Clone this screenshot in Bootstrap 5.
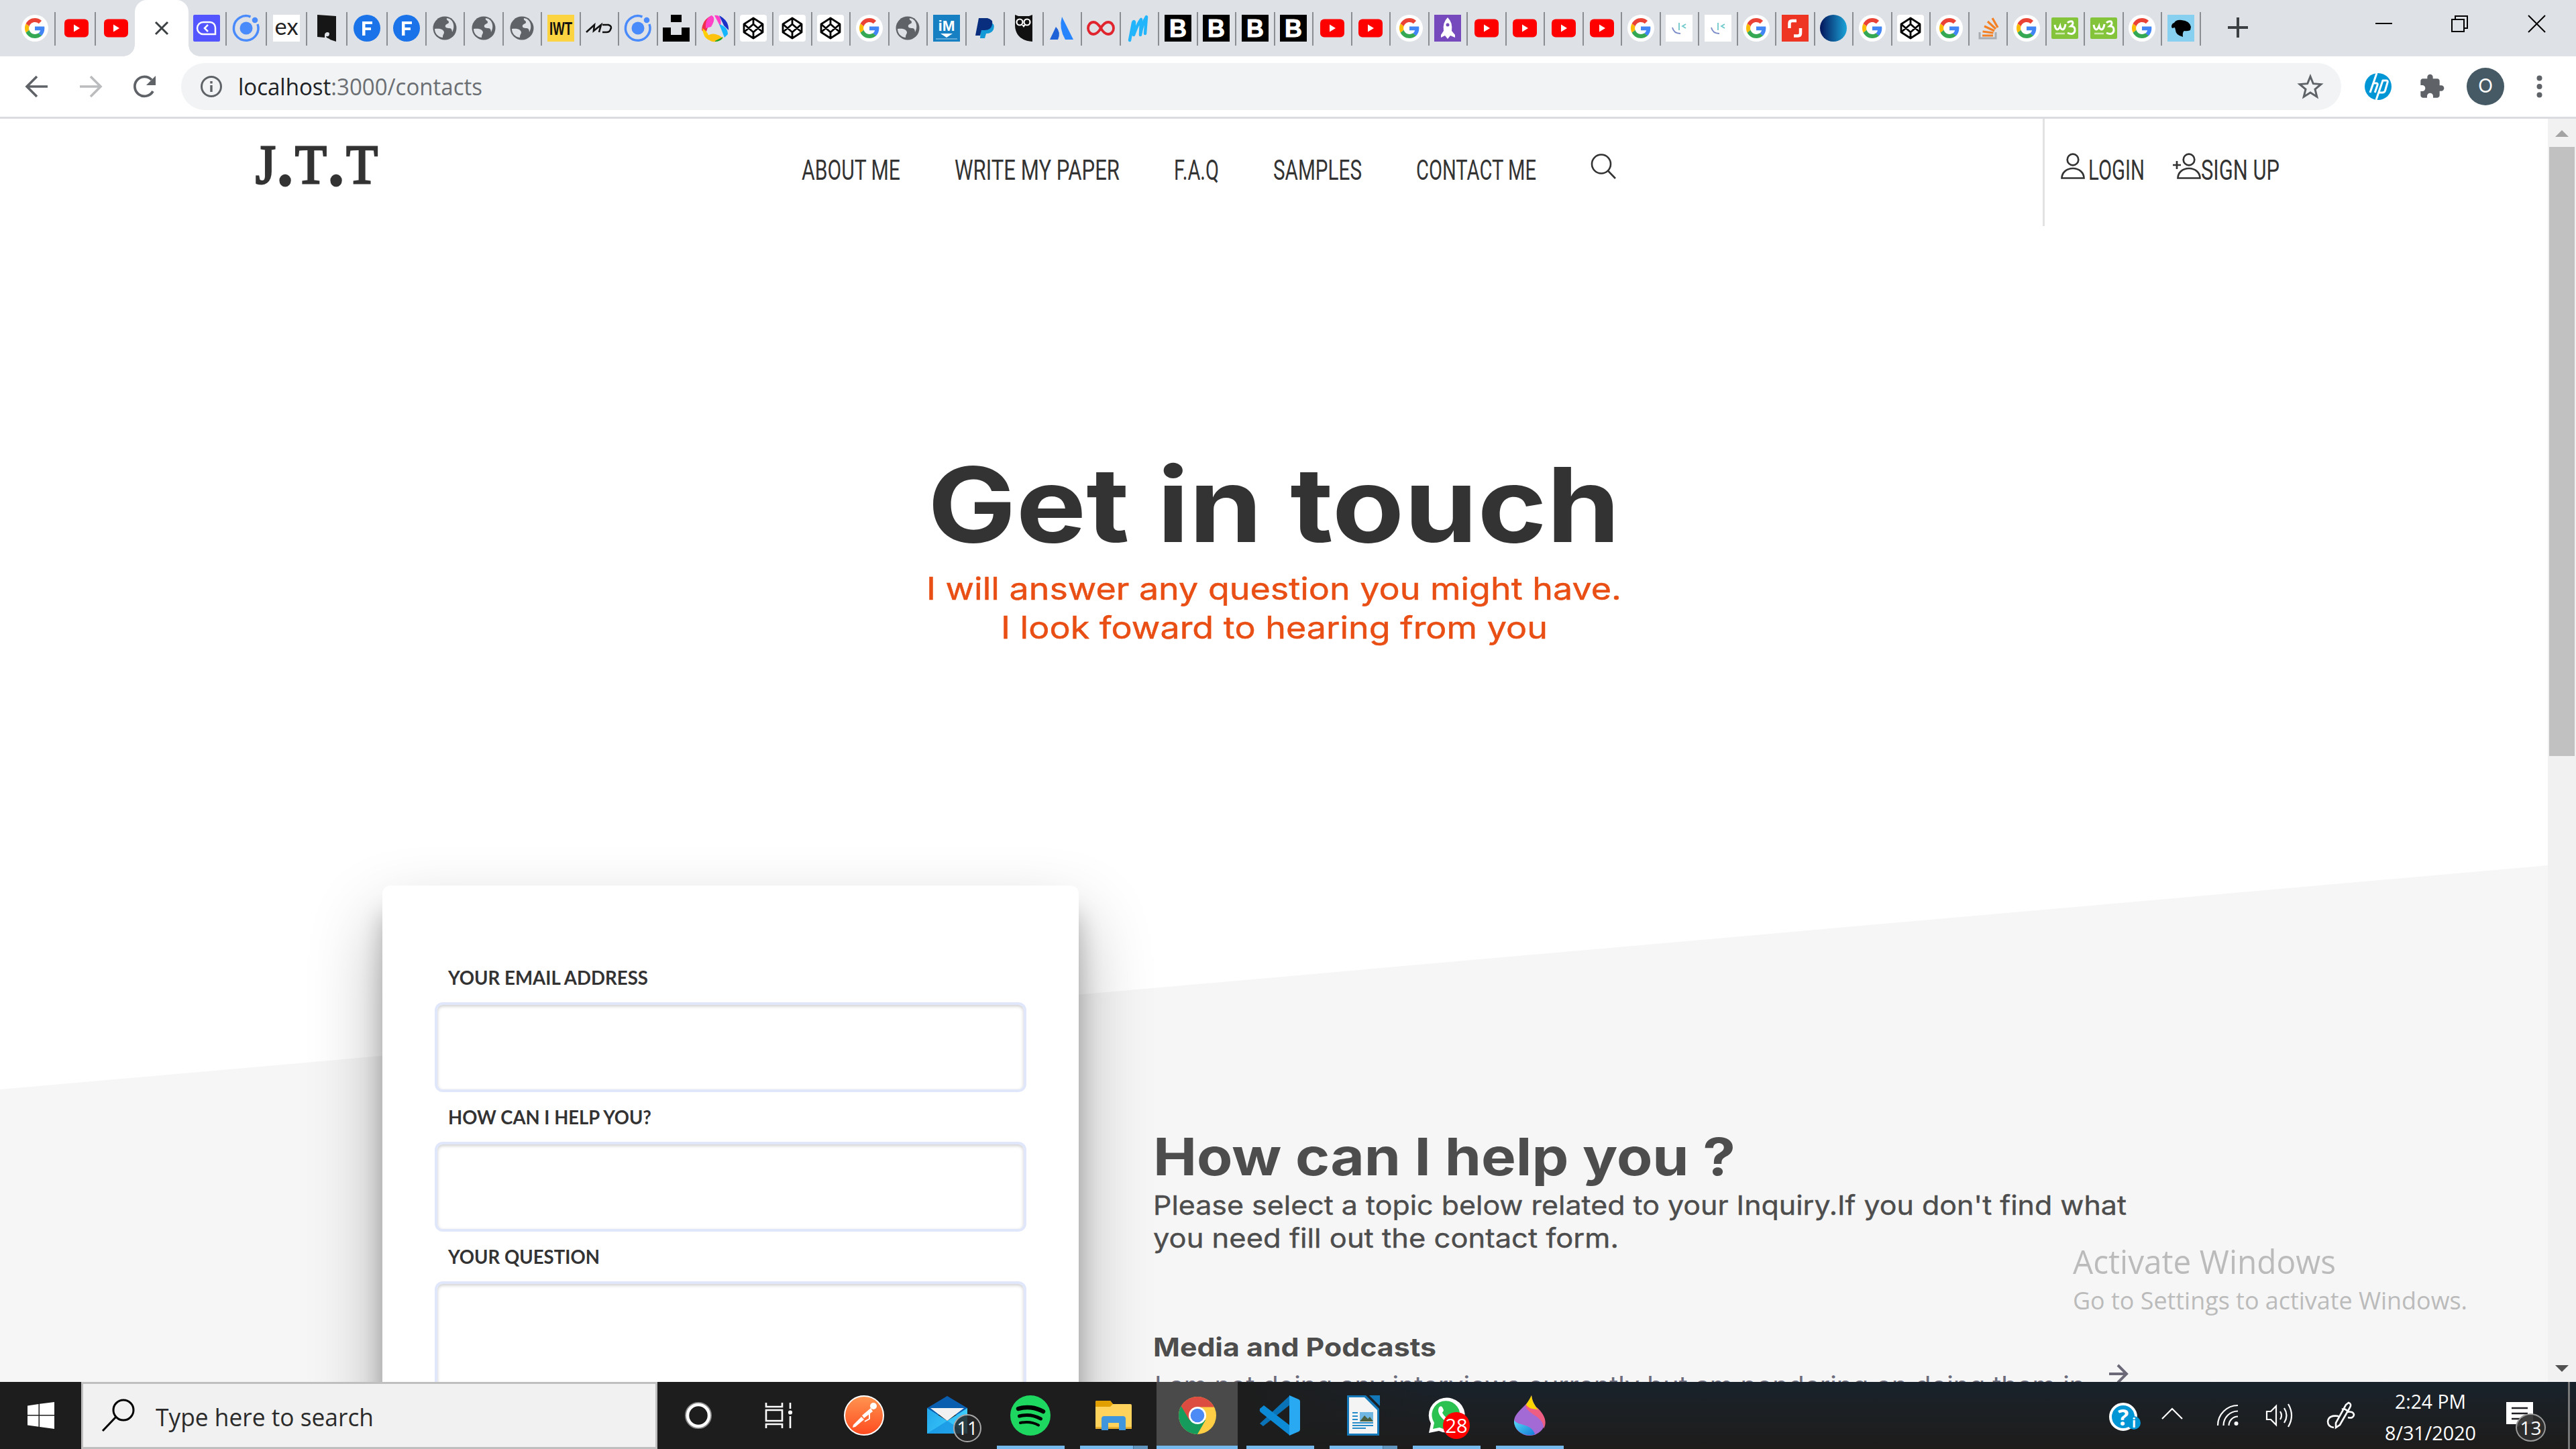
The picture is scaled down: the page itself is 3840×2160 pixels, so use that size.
<!DOCTYPE html>
<html lang="en">
<head>
<meta charset="utf-8">
<title>J.T.T - Contacts</title>
<link href="https://cdn.jsdelivr.net/npm/bootstrap@5.3.0/dist/css/bootstrap.min.css" rel="stylesheet">
<style>
html,body{width:3840px;height:2160px;overflow:hidden}
body{font-family:Inter,"Open Sans",sans-serif;color:#333;background:#fff}
svg{display:block;flex:none;overflow:visible}
.fit{display:inline-block;white-space:nowrap;transform-origin:0 50%}
.segoe{font-family:"Open Sans","Noto Sans",sans-serif}
.tabstrip{height:84px;background:#dee1e6;padding-left:22.5px}
.tab-item{width:57.5px;height:50px;margin-top:18px;border-right:2.5px solid #8a8d91}
.tab-item.wide{width:60px}
.tab-item.nudge{padding-left:5px}
.tab-item.no-line{border-color:transparent;width:58px}
.tab-active{width:80px;height:84px;background:#fff;border-radius:18px 18px 0 0;position:relative}
.tab-active::before,.tab-active::after{content:"";position:absolute;bottom:0;width:17px;height:17px}
.tab-active::before{left:-17px;background:radial-gradient(circle at 0 0,transparent 16.5px,#fff 17px)}
.tab-active::after{right:-17px;background:radial-gradient(circle at 100% 0,transparent 16.5px,#fff 17px)}
.win-min{margin-left:190px}.win-max{margin-left:88px}.win-close{margin-left:90px}
.toolbar{height:93px;border-bottom:3px solid #dadce0;padding-left:35px}
.tool-gap{gap:40px}
.omnibox{width:3220px;height:70px;border-radius:35px;background:#f1f3f4;margin-left:35px;padding:0 26px 0 28px;font-size:35px;color:#6b6e72}
.omnibox b{font-weight:400;color:#202124}
.url-text{margin-left:23px}
.avatar-dot{width:56px;height:56px;background:#455a64;color:#fff;font-size:29px;line-height:54px}
.viewport{height:1883px}
.site{width:3798px;height:1883px;overflow:hidden;position:relative;isolation:isolate}
.site::before{content:"";position:absolute;inset:0;z-index:-1;background:#f6f6f6;clip-path:polygon(0 1447px,100% 1113px,100% 100%,0 100%)}
.scroll-track{width:42px;background:#f1f1f1;padding:17px 2px 15px}
.scroll-thumb{height:908px;margin-top:15px;background:#c1c1c1}
.site-head{height:160px;padding-left:381px}
.brand-mark{width:814px;padding-top:27px;font:400 83px/82px "Liberation Serif",serif;color:#333;-webkit-text-stroke:3px #333}
.brand-mark i{font-style:normal;-webkit-text-stroke:9px #333;margin:0 6px 0 5px}
.menu{gap:81px;font:400 42px/50px Roboto,sans-serif;color:#333;padding-top:52px}
.account{width:753px;border-left:3px solid #e2e2e2;padding:52px 0 0 24px;font:400 42px/50px Roboto,sans-serif}
.signup-link{margin-left:42px}
.hero{padding-top:335px}
.hero h1{font-size:154px;line-height:160px;font-weight:700;margin:0;color:#333}
.hero p{margin:16px 0 0;font-size:46px;line-height:58px;font-weight:400;color:#e94e14;-webkit-text-stroke:.5px #e94e14}
.contact-row{margin-top:356px;padding-left:570px}
.ask-card{width:1038px;height:1000px;background:#fff;border-radius:12px;padding:117px 78px;box-shadow:0 53px 107px rgba(0,0,0,.3),0 42px 34px rgba(0,0,0,.22)}
.ask-card label{display:block;height:40px;padding-left:20px;margin-bottom:17px;font:700 28px/40px Lato,sans-serif;color:#333}
.ask-card .form-control{height:134px;margin-bottom:17px;border:4px solid #e1e7fb;border-radius:12px;box-shadow:inset 0 2px 5px rgba(0,0,0,.2)}
.ask-card textarea.form-control{height:320px;resize:none}
.topics{margin-left:111px;padding-top:364px;color:#4d4d4d}
.topics h2{font-size:77px;line-height:80px;font-weight:700;margin:0 0 8px}
.topics p{font-size:40px;line-height:49px;font-weight:400;margin:0;-webkit-text-stroke:.4px #4d4d4d}
.topics h3{font-size:38px;line-height:50px;font-weight:700;margin:113px 0 7px}
.topics .topic-text{font-size:38px;line-height:50px;font-weight:400;color:#6b6b7b;width:1424px}
.topic-text{padding-left:2px}
.watermark{position:absolute;left:3090px;top:1850px;color:#bbb}
.watermark .wm-a{font-size:48.5px;line-height:60px}
.watermark .wm-b{font-size:36px;line-height:52px;margin-top:3px}
.taskbar{height:100px;background:linear-gradient(90deg,#1d1d1d 0,#1d1d1d 48%,rgba(29,29,29,0) 56%),linear-gradient(#19222b,#1c1f22 55%,#1e1c1b)}
.start-key{width:121px}
.find-box{width:859px;background:#f1f1f1;border:3px solid #bfbfbf;padding-left:27px;font-size:37px;color:#2b2b2b}
.find-text{margin-left:31px;margin-top:4px}
.sys-key{width:122px}
.first-app{margin-left:2px}
.app-key{width:124px;position:relative}
.app-key .bar{position:absolute;bottom:0;left:12px;width:101px;height:5px;background:#76b9ed}
.app-key .bar.split{background:linear-gradient(90deg,#76b9ed 78%,#4a7598 78%,#4a7598 79.5%,#6095bf 79.5%)}
.app-key.live .bar{left:0;width:100%}
.app-key.live{background:#4a4a4a;width:121px;margin:0 1px 0 2px}
.count-dot{position:absolute;border-radius:50%;color:#fff;text-align:center}
.count-mail{width:42px;height:42px;left:71px;top:48px;background:rgba(38,38,38,.85);border:2px solid #a8a8a8;font-size:27px;line-height:38px}
.count-wa{width:40px;height:40px;left:57px;top:45px;background:#f00;font-size:29px;line-height:40px}
.count-note{width:45px;height:42px;left:14px;top:47px;background:rgba(46,46,46,.92);border:2px solid #9a9a9a;font-size:28px;line-height:38px}
.clock{font-size:29px;line-height:47px;color:#fff;width:140px;margin-left:42px;padding-top:3px}
.note-key{width:80px;position:relative;margin-left:43px;padding-top:30px}
.desk-edge{width:3px;background:#777;margin:0 9px 0 12px}
</style>
</head>
<body>
<header>
<div class="tabstrip d-flex" id="tabs"></div>
<div class="toolbar d-flex align-items-center">
 <div class="d-flex tool-gap">
  <svg width="40" height="40" viewBox="0 0 40 40" fill="none" stroke="#5f6368" stroke-width="3.6"><path d="M36 20H6M20 5 5 20l15 15"/></svg>
  <svg width="40" height="40" viewBox="0 0 40 40" fill="none" stroke="#babcbe" stroke-width="3.6"><path d="M4 20h30M20 5l15 15-15 15"/></svg>
  <svg width="40" height="40" viewBox="0 0 40 40"><path d="M33 27A14.500 14.500 0 1 1 31 10" fill="none" stroke="#5f6368" stroke-width="3.800"/><path d="M37 4v14H23z" fill="#5f6368"/></svg>
 </div>
 <div class="omnibox segoe d-flex align-items-center">
  <svg width="34" height="34" viewBox="0 0 34 34"><circle cx="17" cy="17" r="14.500" fill="none" stroke="#5f6368" stroke-width="3"/><path d="M15.300 15h3.400v10h-3.400zM15.300 9h3.400v3.400h-3.400z" fill="#5f6368"/></svg>
  <span class="url-text"><span class="fit" data-w="364"><b>localhost</b>:3000/contacts</span></span>
  <svg class="ms-auto" width="40" height="40" viewBox="0 0 40 40" fill="none" stroke="#5f6368" stroke-width="3"><path d="M20 5l4.300 10.700 11.500.9-8.800 7.400 2.800 11.200L20 29.100l-9.800 6.100L13 24l-8.800-7.400 11.500-.9z"/></svg>
 </div>
 <svg style="margin-left:35px" width="40" height="40" viewBox="0 0 40 40"><circle cx="20" cy="20" r="20" fill="#0096d6"/><g fill="none" stroke="#fff" stroke-width="3" stroke-linejoin="round"><path d="M18 0 8 29M12.500 15H17q3 0 2 3l-3.800 11M32 11h-5L17 40M32 11q3 0 2 3l-3.500 12q-1 3-4 3H22"/></g></svg>
 <svg style="margin-left:40px" width="40" height="40" viewBox="0 0 24 24"><path fill="#5f6368" d="M20.500 11H19V7c0-1.100-.9-2-2-2h-4V3.500a2.500 2.500 0 0 0-5 0V5H4c-1.100 0-2 .9-2 2v3.800h1.500a2.700 2.700 0 0 1 0 5.400H2V20c0 1.100.9 2 2 2h3.800v-1.500a2.700 2.700 0 0 1 5.400 0V22H17c1.100 0 2-.9 2-2v-4h1.500a2.500 2.500 0 0 0 0-5z"/></svg>
 <div class="avatar-dot rounded-circle text-center" style="margin-left:32px">O</div>
 <svg style="margin-left:48px" width="9" height="34" viewBox="0 0 9 34" fill="#5f6368"><circle cx="4.500" cy="4.500" r="4"/><circle cx="4.500" cy="17" r="4"/><circle cx="4.500" cy="29.500" r="4"/></svg>
</div>
</header>

<div class="viewport d-flex">
<main class="site">
 <div class="site-head d-flex">
  <div class="brand-mark"><span class="fit" data-w="182">J<i>.</i>T<i>.</i>T</span></div>
  <nav class="menu d-flex align-items-start">
   <span class="fit" data-w="147">ABOUT ME</span>
   <span class="fit" data-w="246">WRITE MY PAPER</span>
   <span class="fit" data-w="67">F.A.Q</span>
   <span class="fit" data-w="132">SAMPLES</span>
   <span class="fit" data-w="179">CONTACT ME</span>
   <svg width="38" height="38" viewBox="0 0 38 38" fill="none" stroke="#333" stroke-width="2.600"><circle cx="16" cy="15.500" r="14"/><path d="M26 25.500 37 37"/></svg>
  </nav>
  <div class="account d-flex align-items-start ms-auto">
   <svg width="37" height="40" viewBox="0 0 37 40" fill="none" stroke="#333" stroke-width="2.700"><circle cx="18" cy="9" r="8.300"/><path d="M1.500 36.500c0-8 7-14.500 16.500-14.500s16.500 6.500 16.500 14.500z"/></svg>
   <span class="fit ms-1" data-w="84">LOGIN</span>
   <svg class="signup-link" width="42" height="40" viewBox="0 0 42 40" fill="none" stroke="#333" stroke-width="2.700"><circle cx="24" cy="9" r="8.300"/><path d="M7.500 36.500C7.500 28.500 14.500 22 24 22s16.500 6.500 16.500 14.500zM0 17h12M6 11v12"/></svg>
   <span class="fit" data-w="117">SIGN UP</span>
  </div>
 </div>
 <section class="hero text-center">
  <h1><span class="fit" data-w="1032">Get in touch</span></h1>
  <p><span class="fit" data-w="1036">I will answer any question you might have.</span><br><span class="fit" data-w="815">I look foward to hearing from you</span></p>
 </section>
 <section class="contact-row d-flex align-items-start">
  <form class="ask-card flex-shrink-0">
   <label><span class="fit" data-w="298">YOUR EMAIL ADDRESS</span></label><input class="form-control" type="email">
   <label><span class="fit" data-w="303">HOW CAN I HELP YOU?</span></label><input class="form-control" type="text">
   <label><span class="fit" data-w="226">YOUR QUESTION</span></label><textarea class="form-control"></textarea>
  </form>
  <div class="topics">
   <h2><span class="fit" data-w="868">How can I help you ?</span></h2>
   <p><span class="fit" data-w="1451">Please select a topic below related to your Inquiry.If you don't find what</span><br><span class="fit" data-w="694">you need fill out the contact form.</span></p>
   <h3><span class="fit" data-w="422">Media and Podcasts</span></h3>
   <div class="d-flex align-items-start">
    <div class="topic-text flex-shrink-0"><span class="fit" data-w="1387">I am not doing any interviews currently but am pondering on doing them in</span></div>
    <svg style="margin-top:-6px" width="30" height="30" viewBox="0 0 30 30" fill="none" stroke="#6b6878" stroke-width="4"><path d="M1 14h26M14 1l13 13-13 13"/></svg>
   </div>
  </div>
 </section>
</main>
<aside class="scroll-track d-flex flex-column align-items-center">
 <svg width="20" height="10" viewBox="0 0 20 10"><path d="M0 10 10 0l10 10z" fill="#a3a3a3"/></svg>
 <div class="scroll-thumb w-100"></div>
 <svg class="mt-auto" width="20" height="10" viewBox="0 0 20 10"><path d="M0 0h20L10 10z" fill="#505050"/></svg>
</aside>
</div>
<div class="watermark segoe"><div class="wm-a"><span class="fit" data-w="392">Activate Windows</span></div><div class="wm-b"><span class="fit" data-w="588">Go to Settings to activate Windows.</span></div></div>

<footer class="taskbar segoe d-flex">
 <div class="start-key d-flex align-items-center justify-content-center"><svg width="40" height="40" viewBox="0 0 40 40" fill="#fff"><path d="M0 5.500 16.500 3v16H0zM18 2.800 40 0v19H18zM0 20.500h16.500v16.300L0 34.500zM18 20.500h22V40l-22-3z"/></svg></div>
 <div class="find-box d-flex align-items-center">
  <svg width="50" height="50" viewBox="0 0 50 50" fill="none" stroke="#000" stroke-width="3"><circle cx="33" cy="17" r="15"/><path d="M22 27 2 48"/></svg>
  <span class="find-text"><span class="fit" data-w="325">Type here to search</span></span>
 </div>
 <div class="sys-key d-flex align-items-center justify-content-center"><svg width="40" height="40" viewBox="0 0 40 40"><circle cx="20" cy="20" r="19" fill="none" stroke="#888" stroke-width="2"/><circle cx="20" cy="20" r="16" fill="none" stroke="#fff" stroke-width="4.500"/></svg></div>
 <div class="sys-key d-flex align-items-center justify-content-center"><svg style="margin-right:6px" width="40" height="40" viewBox="0 0 40 40" fill="none" stroke="#fff" stroke-width="2.600"><path d="M2 1v6h24V1M2 39v-6h24v6M2 12h24v16H2zM38 1v9M38 21v18"/><circle cx="38" cy="15.500" r="1.800" fill="#fff"/></svg></div>
 <div class="app-key first-app d-flex align-items-center justify-content-center">
  <svg width="60" height="60" viewBox="0 0 60 60"><defs><linearGradient id="po" x2="0" y2="1"><stop stop-color="#ff9550"/><stop offset="1" stop-color="#ff4b1f"/></linearGradient></defs><circle cx="30" cy="30" r="29" fill="url(#po)" stroke="#fff" stroke-width="2"/><circle cx="44" cy="16" r="5" fill="#fff"/><path d="M40 19 27 30l3 4 13-10zM26 32 14 44l-1 4 4-1 13-11z" fill="#fff"/><path d="M38 27v8l-7 4" fill="none" stroke="#fff" stroke-width="2"/></svg></div>
 <div class="app-key d-flex align-items-center justify-content-center">
  <svg width="60" height="60" viewBox="0 0 60 60"><defs><linearGradient id="ml" x2="1" y2=".4"><stop stop-color="#22a6ea"/><stop offset="1" stop-color="#3fd0ff"/></linearGradient></defs><path d="M0 19 30 1l30 18v10H0z" fill="#0a5eb0"/><path d="M0 19v38h60V19L30 38z" fill="url(#ml)"/><path d="m30 38 30 19H0z" fill="#1490df" opacity=".7"/><path d="M5 19h50L30 38z" fill="#f1f1f1"/></svg>
  <span class="count-dot count-mail">11</span></div>
 <div class="app-key d-flex align-items-center justify-content-center">
  <svg width="60" height="60" viewBox="0 0 60 60"><circle cx="30" cy="30" r="30" fill="#1ed760"/><g fill="none" stroke="#000" stroke-linecap="round"><path d="M12 20c12-4 26-2 37 4" stroke-width="6.500"/><path d="M13.500 31c11-3 22-1.500 32 4" stroke-width="5"/><path d="M15 41c10-2 19-1 27 3.500" stroke-width="4"/></g></svg>
  <span class="bar"></span></div>
 <div class="app-key d-flex align-items-center justify-content-center">
  <svg width="54" height="46" viewBox="0 0 54 46"><path d="M0 3q0-2 2-2h20l4 5h26q2 0 2 2v34H0z" fill="#ffd35c"/><path d="M0 3q0-2 2-2h20l4 5-4 4H0z" fill="#e2a000"/><path d="M0 40h54v3H0z" fill="#e9b030"/><path d="M9 45V28q0-4 4-4h28q4 0 4 4v17H35V34H19v11z" fill="#3f96dd"/></svg>
  <span class="bar split"></span></div>
 <div class="app-key live d-flex align-items-center justify-content-center">
  <svg width="56" height="56" viewBox="0 0 56 56"><circle cx="28" cy="28" r="28" fill="#ffce44"/><path d="M28 28 3.800 14A28 28 0 0 0 28 56l12-21z" fill="#159c5c"/><path d="M3.800 14a28 28 0 0 1 48.400 0L52.500 15.500H28L16 35z" fill="#dc4c40"/><circle cx="28" cy="28" r="13" fill="#fff"/><circle cx="28" cy="28" r="10.300" fill="#4c8bf5"/></svg>
  <span class="bar"></span></div>
 <div class="app-key d-flex align-items-center justify-content-center">
  <svg width="60" height="60" viewBox="0 0 60 60"><path d="m0 42 5 4 40-32V0z" fill="#0a73b8"/><path d="m0 20 6-5 39 30v15L1 25q-2-2-1-5z" fill="#0d8ad6"/><path d="m44 0 14 6q2 1 2 3v42q0 2-2 3l-14 6z" fill="#29a9f2"/></svg>
  <span class="bar"></span></div>
 <div class="app-key d-flex align-items-center justify-content-center">
  <svg width="50" height="60" viewBox="0 0 50 60"><path d="M1 0h28l20 20v40H1z" fill="#1578b8"/><path d="M4 3h23l19 19v35H4z" fill="#f4f4f4"/><path d="M34 0h16v16z" fill="#1278b8"/><path d="M20 25h20v14H20z" fill="#6fb6e2"/><path d="m20 39 7-9 5 5 3-3 5 7z" fill="#4b6040"/><path d="M9 26h8M9 31h8M9 36h8M9 41h31M9 45h31M9 49h20" stroke="#258bc9" stroke-width="1.800"/></svg>
  <span class="bar split"></span></div>
 <div class="app-key d-flex align-items-center justify-content-center">
  <svg width="54" height="56" viewBox="0 0 54 56"><path d="M1 54 4 40A27 26 0 1 1 16 51z" fill="#fff"/><path d="m7 48 2-9a21 21 0 1 1 8 7z" fill="#2bc252"/><path d="M17 15c3-2 4 0 6 5 0 2-2 3-2 4 3 5 6 8 11 10l4-4c4 2 6 3 6 4-1 7-8 7-13 4C20 34 11 22 17 15z" fill="#fff"/></svg>
  <span class="count-dot count-wa">28</span><span class="bar"></span></div>
 <div class="app-key d-flex align-items-center justify-content-center">
  <svg width="46" height="60" viewBox="0 0 46 60"><defs><linearGradient id="dr" x2="1" y2="1"><stop stop-color="#57dcf5"/><stop offset="1" stop-color="#147bd8"/></linearGradient></defs><path d="M26 0C22 15 0 24 0 39a23 21 0 0 0 46 0C46 26 28 20 26 0z" fill="#a36ad6"/><path d="M17 14c0 14 29 17 27 36 7-12-1-24-10-32z" fill="#ee5d83"/><path d="M26 0c-4 8-6 10-8 14 6 8 12 5 18 8C30 14 27 9 26 0z" fill="#ffd500"/><path d="M0 37c5 9 26 4 31 21A23 21 0 0 1 0 37z" fill="url(#dr)"/></svg>
  <span class="bar"></span></div>
 <div class="d-flex align-items-center ms-auto">
  <svg width="50" height="46" viewBox="0 0 50 46"><circle cx="22" cy="25" r="19" fill="#0096d6" stroke="#fff" stroke-width="4"/><text x="22" y="38" text-anchor="middle" fill="#fff" font-size="34" font-weight="700">?</text><circle cx="38" cy="34" r="10" fill="#0096d6"/><text x="38" y="41" text-anchor="middle" fill="#fff" font-size="20" font-weight="700">i</text></svg>
  <svg style="margin-left:29px;margin-top:-6px" width="32" height="17" viewBox="0 0 32 17" fill="none" stroke="#fff" stroke-width="2.200"><path d="M1 16 16 1l15 15"/></svg>
  <svg style="margin-left:51px" width="32" height="32" viewBox="0 0 32 32" fill="none" stroke="#fff" stroke-width="2.200"><path d="M1 31A30 30 0 0 1 31 1M9.500 31A21.500 21.500 0 0 1 31 9.500M17.500 31A13.500 13.500 0 0 1 31 17.500"/><circle cx="28.500" cy="28" r="3" fill="#fff" stroke="none"/></svg>
  <svg style="margin-left:41px" width="42" height="38" viewBox="0 0 42 38" fill="none" stroke="#fff" stroke-width="2.200"><path d="M1 13h6l8-8v28l-8-8H1zM21 13q4 6 0 12M27 8q7 11 0 22M33 2q10 17 0 34"/></svg>
  <svg style="margin-left:49px" width="42" height="42" viewBox="0 0 42 42" fill="none" stroke="#fff" stroke-width="2.600"><path d="M32 2q5 2 2 7L19 35l-6 4 0-7L28 5zM22 12q4-2 8 2M29 16q10-2 11 4-1 6-9 4M17 22Q2 20 1 30q0 8 9 9"/></svg>
  <div class="clock text-center"><span class="fit" data-w="106">2:24 PM</span><br><span class="fit" data-w="136">8/31/2020</span></div>
 </div>
 <div class="note-key"><svg width="40" height="38" viewBox="0 0 40 38"><path d="M0 0h40v33H22l-6 5v-5H0z" fill="#fff"/><path d="M8 9h24M8 17h24M8 25h16" stroke="#1d1f22" stroke-width="2.500"/></svg><span class="count-dot count-note">13</span></div>
 <div class="desk-edge"></div>
</footer>

<script src="https://cdn.jsdelivr.net/npm/bootstrap@5.3.0/dist/js/bootstrap.bundle.min.js"></script>
<script>
const txt=(t,x,y,s,w,c,f)=>`<text x="20" y="${y}" text-anchor="middle" font-size="${s}" font-weight="700" textLength="${w}" lengthAdjust="spacingAndGlyphs" fill="${c}" font-family="${f||'Liberation Sans'}">${t}</text>`;
const box=(c,r)=>`<rect width="40" height="40" rx="${r||0}" fill="${c}"/>`;
const icons={
 g:`<circle cx="20" cy="20" r="20" fill="#fff"/><g transform="translate(5 5) scale(.625)"><path fill="#EA4335" d="M24 9.500c3.540 0 6.710 1.220 9.210 3.600l6.850-6.850C35.900 2.380 30.470 0 24 0 14.620 0 6.510 5.380 2.560 13.220l7.980 6.190C12.430 13.720 17.740 9.500 24 9.500z"/><path fill="#4285F4" d="M46.980 24.550c0-1.570-.15-3.090-.38-4.550H24v9.020h12.940c-.58 2.960-2.260 5.480-4.780 7.180l7.730 6c4.510-4.180 7.090-10.360 7.090-17.650z"/><path fill="#FBBC05" d="M10.530 28.590c-.48-1.450-.76-2.990-.76-4.590s.27-3.140.76-4.590l-7.980-6.190C.92 16.460 0 20.120 0 24c0 3.880.92 7.540 2.560 10.780l7.970-6.190z"/><path fill="#34A853" d="M24 48c6.480 0 11.930-2.130 15.890-5.810l-7.730-6c-2.150 1.450-4.920 2.300-8.160 2.300-6.260 0-11.570-4.220-13.470-9.910l-7.980 6.190C6.510 42.620 14.620 48 24 48z"/></g>`,
 yt:`<rect x="2" y="6.500" width="36" height="27" rx="6" fill="#f00"/><path d="M16 14.500v11l9-5.500z" fill="#fff"/>`,
 chat:box('#5356ff',2)+`<path d="M6 20a9 9 0 0 1 9-9h10a8 8 0 0 1 8 8v10H15a9 9 0 0 1-9-9z" fill="none" stroke="#fff" stroke-width="2.500"/><path d="m22 15-5 5 5 5" fill="none" stroke="#fff" stroke-width="2.500"/>`,
 ion:`<path d="M26.500 3A18.300 18.300 0 1 0 37 14" fill="none" stroke="#4a8bfc" stroke-width="3.500"/><circle cx="20" cy="20" r="9.500" fill="#4a8bfc"/><circle cx="33" cy="8" r="4.300" fill="#4a8bfc"/>`,
 ex:box('#fff')+`<text x="20" y="30" text-anchor="middle" font-size="34" textLength="35" lengthAdjust="spacingAndGlyphs" fill="#222" font-family="Lato">ex</text>`,
 door:`<path d="M6 0l28 2v38l-9-3c-1-2-6-2-6-5 3 1 5 0 5-4 0-3-7-3-7 2v4L6 33z" fill="#161616"/>`,
 f:`<circle cx="20" cy="20" r="20" fill="#1a73e8"/><path d="M13 10h15v4H17.500v5H26v4h-8.500v8H13z" fill="#fff"/>`,
 globe:`<circle cx="20" cy="20" r="17.500" fill="#5f6368"/><path d="M5 21c7-1 13 0 14 5 0 3-2 3-2 8C9 33 5 27 5 21zM23 5c-1 4 3 3 3 6s-4 2-5 5 2 4 6 4c3 0 4 3 4 6 4-7 3-16-4-20z" fill="#dee1e6"/>`,
 iwt:box('#fcd340')+txt('IWT',20,30,27,34,'#111'),
 md:`<path d="M1 26 13 15l-1 9 11-9-3 11M25 15h9q6 2 3 7-1 4-6 4h-6" fill="none" stroke="#111" stroke-width="2.600"/>`,
 un:`<path d="M12 0h16v11H12zM0 19h12v11h16V19h12v21H0z" fill="#000"/>`,
 ring:`<path d="M15 1q-14 6-15 22l6 5z" fill="#f0304a"/><path d="M15 1q7 4-1 17L6 20q-1-15 9-19z" fill="#ff41c8"/><path d="M19 1q12-2 9 17z" fill="#ff3fc8"/><path d="M26 1q15 8 14 22l-7-7z" fill="#1b2fc9"/><path d="M26 14q13 4 13 15l-5 5z" fill="#14b7ff"/><path d="M1 20q1 14 10 18 1-11-10-18z" fill="#ffcf00"/><path d="M6 33q12-10 26 2-11 8-19 4z" fill="#ffc20e"/><path d="m20 39 12-6q-3 7-12 7z" fill="#15a326"/>`,
 cp:box('#fff',4)+`<g fill="none" stroke="#000" stroke-width="2.800" stroke-linejoin="round"><path d="M20 5 34 14v12L20 35 6 26V14zM20 5v9M20 26v9M6 14l14 12 14-12M6 26l14-12 14 12"/></g>`,
 im:box('#1680c2')+`<text x="20" y="24" text-anchor="middle" font-size="22" font-weight="700" fill="#fff" font-family="Liberation Sans" textLength="25" lengthAdjust="spacingAndGlyphs">iM</text><path d="M11 28h18l-9 6z" fill="#fff"/><path d="M4 36h32" stroke="#7bb9df" stroke-width="1.500"/>`,
 pp:`<path d="M15 10h12q9 3 6 12-3 6-11 6l-2 7h-7z" fill="#139ad6"/><path d="M11 5h13q9 2 7 10-2 8-11 8h-5l-2 8H6z" fill="#0a2e7e"/>`,
 owl:`<path d="M7 0l5 2h16l5-2v40Q8 38 7 16z" fill="#111"/><g fill="none" stroke="#fff" stroke-width="2.200"><circle cx="14" cy="11" r="4.500"/><circle cx="25" cy="11" r="4.500"/></g><path d="m17 15 3 4 3-4z" fill="#fff"/>`,
 at:`<path d="M11 18q8 8 3 19H2z" fill="#1f62d8"/><path d="m20 3 17 34H25Q15 20 20 3z" fill="#2684ff"/>`,
 inf:`<path d="M20 20C15 12 12 11 9 11a8 9 0 0 0 0 18c4 0 7-2 11-9 4-7 7-9 11-9a8 9 0 0 1 0 18c-4 0-7-2-11-9z" fill="none" stroke="#e0252f" stroke-width="3.800"/>`,
 m:`<path d="M6 38 11 12q1-3 2-1l-1 19Q18 13 23 7l-1 23Q25 12 31 3l-2 25" fill="none" stroke="#22b5fb" stroke-width="4.500" stroke-linecap="round" stroke-linejoin="round"/>`,
 b:box('#000')+`<text x="20" y="33" text-anchor="middle" font-size="36" font-weight="700" fill="#fff" stroke="#fff" font-family="Liberation Sans">B</text>`,
 ro:box('#764abc')+`<path d="M20 4q8 8 6 20l5 6v4l-7-3-4 5-4-5-6 3v-4l4-6Q12 12 20 4z" fill="#fff"/><circle cx="20" cy="15" r="2.500" fill="#764abc"/>`,
 sm:box('#fff')+`<path d="M10 19q2 9 12 9" fill="none" stroke="#7b8cc8" stroke-width="1.800"/><path d="M20 12v11M30 14l-5 3 5 3" fill="none" stroke="#6fc9cc" stroke-width="1.800"/>`,
 ss:box('#ee3524')+`<path d="M11.500 20v-7q0-4 4-4H22M18 31.500h6q4 0 4-4V20" fill="none" stroke="#fff" stroke-width="4.500"/>`,
 cir:`<defs><linearGradient id="cg"><stop stop-color="#03145a"/><stop offset="1" stop-color="#1aa4d8"/></linearGradient></defs><circle cx="20" cy="20" r="20" fill="url(#cg)"/>`,
 so:`<path d="M8 26v9h24v-9" fill="none" stroke="#a9adb2" stroke-width="3"/><g stroke="#f48024" stroke-width="3.200"><path d="M12 31h16M12.500 25l16 2M15 17l15 7M20 10l12 11M27 5l8 14"/></g>`,
 w3:`<rect y="4" width="40" height="32" rx="2" fill="#83c43b"/><path d="M5 15q1 7 4 7 2 0 4-5 1 5 4 5 3-1 4-8M24 12q3-3 7-2 3 3-2 7 7 0 6 7-2 7-11 3" fill="none" stroke="#fff" stroke-width="3"/><path d="M6 28h14" stroke="#cfe8ae" stroke-width="2.500"/>`,
 li:box('#87d0f0')+`<path d="M6 18q0-5 4-6 3-5 11-4 12 1 14 10l-1 5q-5 2-9 1-3 2-2 9-11-3-11-10l-1-4-4 1z" fill="#000"/>`
};
const pre=['g','yt','yt'];
const post='chat ion ex door f f globe globe globe iwt md ion un ring cp cp cp g globe im pp owl at inf m b b b b yt yt g ro yt yt yt yt g sm sm g ss cir g cp g so g w3 w3 g li'.split(' ');
const tab=(n,c)=>`<div class="tab-item ${c} d-flex align-items-center justify-content-center"><svg style="margin-top:-2px" width="40" height="40" viewBox="0 0 40 40">${icons[n]}</svg></div>`;
document.getElementById('tabs').innerHTML=
 pre.map((n,i)=>tab(n,i==2?'no-line nudge':(i?'wide nudge':'wide'))).join('')+
 `<div class="tab-active d-flex align-items-center justify-content-center"><svg width="20" height="20" viewBox="0 0 20 20" stroke="#3c4043" stroke-width="3"><path d="m1 1 18 18M19 1 1 19"/></svg></div>`+
 post.map((n,i)=>tab(n,i>0&&i<5?'wide':'')).join('')+
 `<svg style="margin:26px 0 0 40px" width="30" height="30" viewBox="0 0 30 30" stroke="#3c4043" stroke-width="4"><path d="M0 15h30M15 0v30"/></svg>
  <svg class="win-min" style="margin-top:23px" width="25" height="24" viewBox="0 0 25 24"><path d="M0 12h25" stroke="#000" stroke-width="2"/></svg>
  <svg class="win-max" style="margin-top:23px" width="25" height="25" viewBox="0 0 25 25" fill="none" stroke="#000" stroke-width="2"><path d="M1 6h18v18H1zM6 6V1h18v18h-5"/></svg>
  <svg class="win-close" style="margin-top:23px" width="25" height="25" viewBox="0 0 25 25" stroke="#000" stroke-width="2"><path d="m0 0 25 25M25 0 0 25"/></svg>`;
// Squeeze or stretch each label to its set width, keeping the flow width in step
document.querySelectorAll('.fit').forEach(e=>{
 const n=e.getBoundingClientRect().width,w=+e.dataset.w;
 e.style.transform=`scaleX(${w/n})`;
 e.style.marginRight=(w-n)+'px';
});
</script>
</body>
</html>
